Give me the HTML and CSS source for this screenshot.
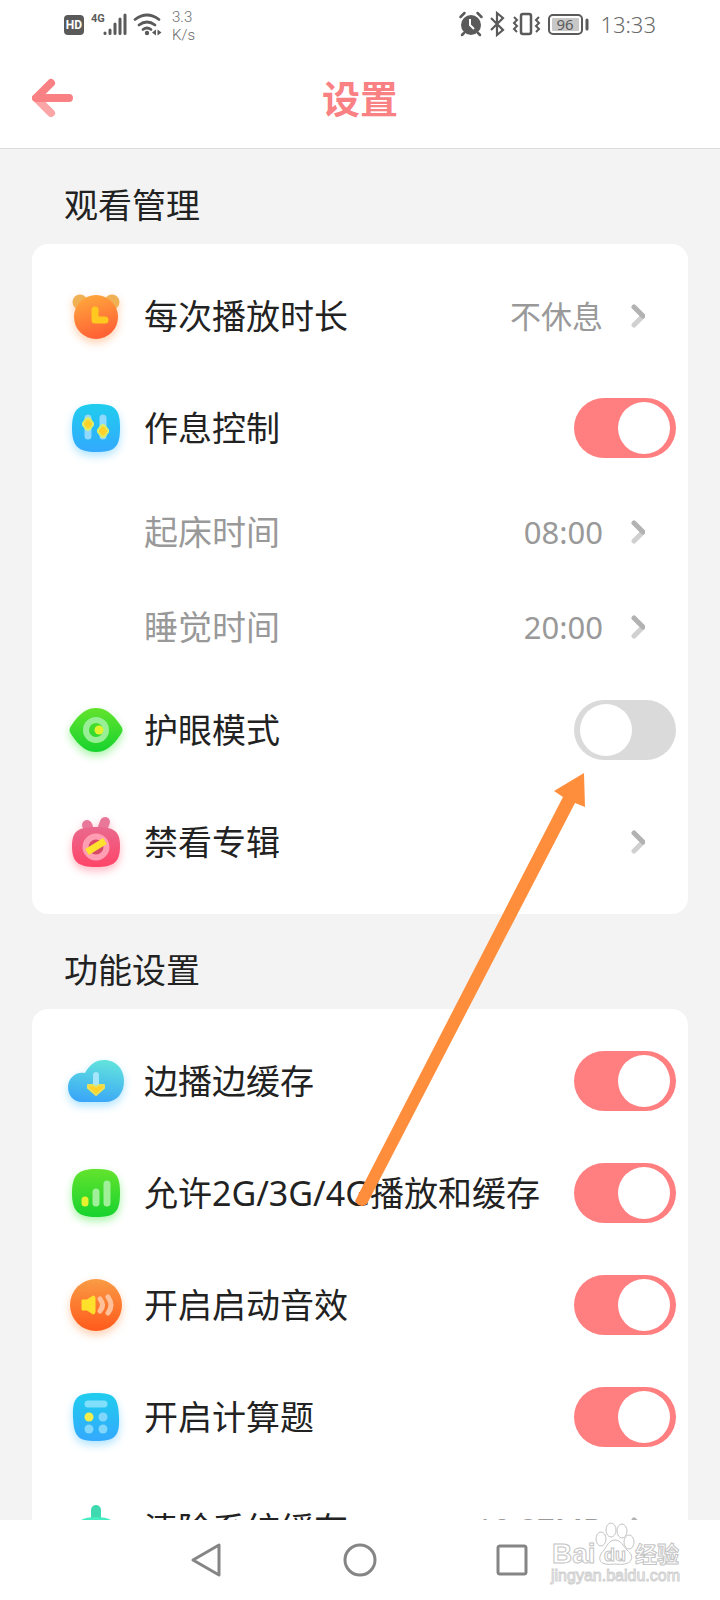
FILE: index.html
```
<!DOCTYPE html>
<html lang="zh-CN">
<head>
    <meta charset="UTF-8">
    <meta name="viewport" content="width=device-width, initial-scale=1.0">
    <title>设置</title>
    <link rel="stylesheet" href="styles.css">
</head>
<body>
    <!-- Status bar -->
    <div class="status-bar">
        <div class="status-left">
            <svg width="110" height="32" viewBox="0 0 110 32">
                <rect x="2" y="7" width="20" height="20" rx="4" fill="#5a5a5a"/>
                <text class="status-hd" x="12" y="21" text-anchor="middle">HD</text>
                <text class="status-4g" x="29" y="14">4G</text>
                <g stroke="#5a5a5a" stroke-width="3" stroke-linecap="round">
                    <path d="M43 25v.5M48 22v3.500M53 16v9.500M58 11v14.500M63 7v18.500"/>
                </g>
                <g fill="none" stroke="#5a5a5a" stroke-width="2.800" stroke-linecap="round">
                    <path d="M73 11.500q12-9 24 0M77 17q8-6 16 0M81 21.500q4-3 8 0"/>
                </g>
                <circle cx="85" cy="25" r="2.200" fill="#5a5a5a"/>
                <path d="M90 24.500l4-3v6zM99.500 24.500l-4-3v6z" fill="#5a5a5a"/>
            </svg>
            <div class="net-speed">3.3<br>K/s</div>
        </div>
        <div class="status-right">
            <svg width="134" height="32" viewBox="0 0 134 32">
                <circle cx="13" cy="17" r="10" fill="#5a5a5a"/>
                <path d="M2.500 9l4-4M23.500 9l-4-4M6 25l-2 2M20 25l2 2" stroke="#5a5a5a" stroke-width="2.500" stroke-linecap="round"/>
                <path d="M12 11v6l4 4" fill="none" stroke="#fff" stroke-width="2"/>
                <path d="M33 10l12 12-6 5V5l6 5-12 12" fill="none" stroke="#5a5a5a" stroke-width="2.200"/>
                <rect x="63" y="6" width="10" height="20" rx="2" fill="none" stroke="#5a5a5a" stroke-width="2.500"/>
                <path d="M56 9l3 3-3 3 3 3-3 3 3 3M81 9l-3 3 3 3-3 3 3 3-3 3" fill="none" stroke="#5a5a5a" stroke-width="2"/>
                <rect x="91" y="7" width="33" height="19" rx="4" fill="none" stroke="#5a5a5a" stroke-width="2"/>
                <rect x="94" y="10" width="27" height="13" rx="1" fill="#c8c8c8"/>
                <text class="status-battery" x="107" y="22" text-anchor="middle">96</text>
                <path d="M129 12v9" stroke="#5a5a5a" stroke-width="3" stroke-linecap="round"/>
            </svg>
            <span class="clock">13:33</span>
        </div>
    </div>

    <!-- Title bar -->
    <header class="title-bar">
        <button class="back" aria-label="返回">
            <svg width="42" height="40" viewBox="0 0 42 40">
                <path d="M4 20l15 15" stroke="#fba5a6" stroke-width="8" stroke-linecap="round"/>
                <path d="M19 5L4 20h33" fill="none" stroke="#f98083" stroke-width="8" stroke-linecap="round" stroke-linejoin="round"/>
            </svg>
        </button>
        <h1>设置</h1>
    </header>

    <main class="content">
        <h2>观看管理</h2>
        <section class="card">
            <button class="row">
                <svg class="icon glow-orange" viewBox="0 0 56 56">
                    <defs>
                        <linearGradient id="clock" x1="0" y1="0" x2="0.300" y2="1"><stop offset="0" stop-color="#ffad3c"/><stop offset="1" stop-color="#ff6335"/></linearGradient>
                    </defs>
                    <circle cx="12" cy="14" r="7.500" fill="#f0b054"/>
                    <circle cx="44" cy="14" r="7.500" fill="#f0b054"/>
                    <circle cx="28" cy="29" r="22" fill="url(#clock)"/>
                    <path d="M27 22v10h10" fill="none" stroke="#ffc91f" stroke-width="7" stroke-linecap="round" stroke-linejoin="round"/>
                </svg>
                <span class="label">每次播放时长</span>
                <span class="value">不休息</span>
                <svg class="chevron" viewBox="0 0 14 24"><path d="M3 21l9-9" stroke="#d0d0d0"/><path d="M3 3l9 9" stroke="#b2b2b2"/></svg>
            </button>
            <label class="row">
                <svg class="icon glow-blue" viewBox="0 0 56 56">
                    <defs>
                        <linearGradient id="blue" x1="0" y1="0" x2="0" y2="1"><stop offset="0" stop-color="#1fcdee"/><stop offset="1" stop-color="#33a9fd"/></linearGradient>
                    </defs>
                    <path d="M28 4C46 4 52 8 52 28S46 52 28 52 4 46 4 28 10 4 28 4z" fill="url(#blue)"/>
                    <path d="M20 18v18M35 18v18" stroke="#8fd9ff" stroke-width="7" stroke-linecap="round"/>
                    <path d="M20 18l2 1 3 4v2l-3 4-2 1-2-1-3-4v-2l3-4zM35 25l2 1 3 4v2l-3 4-2 1-2-1-3-4v-2l3-4z" fill="#ffd32a" stroke="#d9ee6c" stroke-width="2" stroke-linejoin="round"/>
                </svg>
                <span class="label">作息控制</span>
                <input class="switch" type="checkbox" checked>
            </label>
            <button class="row sub">
                <span class="label">起床时间</span>
                <span class="value">08:00</span>
                <svg class="chevron" viewBox="0 0 14 24"><path d="M3 21l9-9" stroke="#d0d0d0"/><path d="M3 3l9 9" stroke="#b2b2b2"/></svg>
            </button>
            <button class="row sub">
                <span class="label">睡觉时间</span>
                <span class="value">20:00</span>
                <svg class="chevron" viewBox="0 0 14 24"><path d="M3 21l9-9" stroke="#d0d0d0"/><path d="M3 3l9 9" stroke="#b2b2b2"/></svg>
            </button>
            <label class="row">
                <svg class="icon glow-green" viewBox="0 0 56 56">
                    <defs>
                        <linearGradient id="green" x1="0" y1="0" x2="0" y2="1"><stop offset="0" stop-color="#63e32d"/><stop offset="1" stop-color="#16d32e"/></linearGradient>
                    </defs>
                    <path d="M3 24C12 10 20 6 28 6s16 4 25 18q3 4 0 8C44 46 36 50 28 50S12 46 3 32q-3-4 0-8z" fill="url(#green)"/>
                    <circle cx="28" cy="28" r="10" fill="none" stroke="#98ef95" stroke-width="6"/>
                    <circle cx="31" cy="28" r="4.500" fill="#e2f32e"/>
                </svg>
                <span class="label">护眼模式</span>
                <input class="switch" type="checkbox">
            </label>
            <button class="row">
                <svg class="icon glow-pink" viewBox="0 0 56 56">
                    <defs>
                        <linearGradient id="pink" x1="0" y1="0" x2="0" y2="1"><stop offset="0" stop-color="#e9698d"/><stop offset="1" stop-color="#ff4468"/></linearGradient>
                    </defs>
                    <path d="M20 13l-1-2M35 13l2-5" stroke="#e9779a" stroke-width="10" stroke-linecap="round"/>
                    <path d="M28 13C46 13 52 17 52 32c0 16-6 21-24 21S4 48 4 32C4 17 10 13 28 13z" fill="url(#pink)"/>
                    <circle cx="28" cy="33" r="10.500" fill="#d94a6a" stroke="#ff9eb2" stroke-width="6"/>
                    <path d="M19 38l18-11" stroke="#ffe22e" stroke-width="7"/>
                </svg>
                <span class="label">禁看专辑</span>
                <svg class="chevron" viewBox="0 0 14 24"><path d="M3 21l9-9" stroke="#d0d0d0"/><path d="M3 3l9 9" stroke="#b2b2b2"/></svg>
            </button>
        </section>

        <h2>功能设置</h2>
        <section class="card">
            <label class="row">
                <svg class="icon glow-blue" viewBox="0 0 56 56">
                    <defs>
                        <linearGradient id="cloud" x1="0.600" y1="0" x2="0.400" y2="1"><stop offset="0" stop-color="#62e3dc"/><stop offset="1" stop-color="#3aa6f8"/></linearGradient>
                    </defs>
                    <path d="M14 49C5 49 0 42 0 34c0-9 8-16 17-14C22 11 28 7 36 7c12 0 20 9 20 21 0 13-8 21-19 21z" fill="url(#cloud)"/>
                    <path d="M28 22v12" stroke="#a4e6fa" stroke-width="6" stroke-linecap="round"/>
                    <path d="M20 32h5l3 2 3-2h5v3l-8 7-8-7z" fill="#ffd32a" stroke="#e6e15a" stroke-width="2" stroke-linejoin="round"/>
                </svg>
                <span class="label">边播边缓存</span>
                <input class="switch" type="checkbox" checked>
            </label>
            <label class="row">
                <svg class="icon glow-green" viewBox="0 0 56 56">
                    <path d="M28 4C46 4 52 8 52 28S46 52 28 52 4 46 4 28 10 4 28 4z" fill="url(#green)"/>
                    <path d="M28 27v11M39 19v19" stroke="#a0f09a" stroke-width="7" stroke-linecap="round"/>
                    <path d="M17 35v3" stroke="#e6f22e" stroke-width="7" stroke-linecap="round"/>
                </svg>
                <span class="label">允许2G/3G/4G播放和缓存</span>
                <input class="switch" type="checkbox" checked>
            </label>
            <label class="row">
                <svg class="icon glow-orange" viewBox="0 0 56 56">
                    <defs>
                        <linearGradient id="sound" x1="0" y1="0" x2="0" y2="1"><stop offset="0" stop-color="#f99b45"/><stop offset="1" stop-color="#ff5a1c"/></linearGradient>
                    </defs>
                    <circle cx="28" cy="28" r="26" fill="url(#sound)"/>
                    <path d="M14 23h5l6-4q2 0 2 2v14q0 2-2 2l-6-4h-5z" fill="#ffe02b" stroke="#ffe02b" stroke-width="1" stroke-linejoin="round"/>
                    <path d="M32 22q5 6 0 12M40 20q6 8 0 16" fill="none" stroke="#ffc09a" stroke-width="5" stroke-linecap="round"/>
                </svg>
                <span class="label">开启启动音效</span>
                <input class="switch" type="checkbox" checked>
            </label>
            <label class="row">
                <svg class="icon glow-blue" viewBox="0 0 56 56">
                    <path d="M28 4C46 4 50 8 51 28S46 52 28 52 6 48 5 28 10 4 28 4z" fill="url(#blue)"/>
                    <path d="M20 15h16" stroke="#80e0fb" stroke-width="7" stroke-linecap="round"/>
                    <g fill="#80d6fb">
                        <circle cx="35" cy="28" r="4.500"/><circle cx="21" cy="40" r="4.500"/><circle cx="35" cy="40" r="4.500"/>
                    </g>
                    <circle cx="21" cy="28" r="4.500" fill="#f2ef4c"/>
                </svg>
                <span class="label">开启计算题</span>
                <input class="switch" type="checkbox" checked>
            </label>
            <button class="row">
                <svg class="icon" viewBox="0 0 56 56">
                    <path d="M28 9v10" stroke="#3fd9b0" stroke-width="10" stroke-linecap="round"/>
                    <path d="M8 24q4-8 20-8t20 8v24H8z" fill="#45ecc0"/>
                </svg>
                <span class="label">清除系统缓存</span>
                <span class="value">10.87MB</span>
                <svg class="chevron" viewBox="0 0 14 24"><path d="M3 21l9-9" stroke="#d0d0d0"/><path d="M3 3l9 9" stroke="#b2b2b2"/></svg>
            </button>
        </section>
    </main>

    <!-- System navigation -->
    <nav class="nav-bar">
        <button aria-label="后退"><svg width="36" height="36" viewBox="0 0 36 36"><path d="M29 3v30L3 18z"/></svg></button>
        <button aria-label="主页"><svg width="36" height="36" viewBox="0 0 36 36"><circle cx="18" cy="18" r="15"/></svg></button>
        <button aria-label="最近任务"><svg width="36" height="36" viewBox="0 0 36 36"><rect x="4" y="4" width="28" height="28" rx="2"/></svg></button>
    </nav>

    <!-- Annotation arrow over the page -->
    <svg class="arrow" viewBox="0 0 240 440">
        <path d="M229 3l1 34-10-4L12 434q-7 5-12-3L208 27l-9-6z" fill="#ff8e3c"/>
    </svg>

    <div class="watermark">
        <svg width="132" height="44" viewBox="0 0 132 44">
            <g fill="#fff" stroke="#c4c4c4">
                <ellipse cx="50" cy="17" rx="5" ry="7"/>
                <ellipse cx="60" cy="8" rx="5" ry="7"/>
                <ellipse cx="71" cy="9" rx="5" ry="7"/>
                <ellipse cx="78" cy="20" rx="5" ry="7"/>
                <path d="M64 18c6 0 8 6 12 10s6 6 4 10-8 5-16 4c-8 1-14 0-15-4s1-6 4-10 5-10 11-10z"/>
                <text class="wm-text" x="1" y="41">Bai</text>
                <text class="wm-du" x="64" y="39" text-anchor="middle">du</text>
                <text class="wm-text wm-cn" x="84" y="40">经验</text>
            </g>
        </svg>
        <span>jingyan.baidu.com</span>
    </div>
</body>
</html>
```
FILE: styles.css
```
* {
    box-sizing: border-box;
}

body {
    margin: 0;
    height: 100vh;
    display: flex;
    flex-direction: column;
    position: relative;
    overflow: hidden;
    background-color: #f3f3f3;
    color: #222;
    font-family: "Noto Sans", "Noto Sans CJK SC", sans-serif;
}

button {
    border: none;
    background: none;
    padding: 0;
    color: inherit;
    font-family: inherit;
    cursor: pointer;
}

/* Status bar */
.status-bar {
    display: flex;
    justify-content: space-between;
    height: 48px;
    padding: 8px 64px 0 62px;
    background-color: #fff;
    color: #6a6a6a;
}

.status-left,
.status-right {
    display: flex;
}

.net-speed {
    font-family: Roboto, sans-serif;
    font-size: 15px;
    font-weight: 300;
    line-height: 18px;
}

.status-right {
    gap: 8px;
}

.clock {
    font-size: 22px;
    font-weight: 300;
    line-height: 32px;
}

.status-hd {
    fill: #fff;
    font: bold 12px Roboto, sans-serif;
}

.status-4g {
    fill: #5a5a5a;
    font: bold 11px Roboto, sans-serif;
}

.status-battery {
    fill: #5a5a5a;
    font-size: 15px;
}

/* Title bar */
.title-bar {
    display: grid;
    grid-template-columns: 1fr auto 1fr;
    align-items: center;
    height: 101px;
    padding: 0 32px;
    background-color: #fff;
    border-bottom: 1px solid #ddd;
}

.back {
    justify-self: start;
    height: 40px;
}

h1 {
    margin: 0;
    color: #f98083;
    font-size: 38px;
    line-height: 48px;
}

/* Content */
.content {
    flex: 1;
    min-height: 0;
    overflow: hidden;
    padding: 0 32px;
}

h2 {
    margin: 0;
    padding: 32px 32px 15px;
    font-size: 34px;
    font-weight: 400;
    line-height: 48px;
}

.card {
    padding: 16px 0;
    border-radius: 16px;
    background-color: #fff;
}

.row {
    display: flex;
    align-items: center;
    width: 100%;
    height: 112px;
    padding: 0 12px 0 36px;
    text-align: left;
}

.row.sub {
    height: 95px;
    padding-left: 112px;
    color: #999;
}

.icon {
    width: 56px;
    height: 56px;
    margin-right: 20px;
    overflow: visible;
}

.glow-orange {
    filter: drop-shadow(0 4px 4px #ffd0b0);
}

.glow-blue {
    filter: drop-shadow(0 4px 4px #b0e4ff);
}

.glow-green {
    filter: drop-shadow(0 4px 4px #a8f5a8);
}

.glow-pink {
    filter: drop-shadow(0 4px 4px #ffb8c4);
}

.label {
    flex: 1;
    font-size: 34px;
    line-height: 48px;
    white-space: nowrap;
}

.value {
    color: #999;
    font-size: 31px;
    line-height: 48px;
}

.chevron {
    width: 14px;
    height: 24px;
    margin: 0 31px 0 28px;
    fill: none;
    stroke-width: 5;
    stroke-linecap: round;
}

/* Switch */
.switch {
    appearance: none;
    width: 102px;
    height: 60px;
    margin: 0;
    padding: 4px 6px;
    border-radius: 30px;
    background-color: #dadada;
    display: flex;
    cursor: pointer;
}

.switch::before {
    content: "";
    width: 52px;
    height: 52px;
    border-radius: 50%;
    background-color: #fff;
}

.switch:checked {
    justify-content: flex-end;
    background-color: #ff7f81;
}

/* Navigation bar */
.nav-bar {
    display: flex;
    justify-content: center;
    align-items: center;
    gap: 116px;
    height: 80px;
    background-color: #fff;
}

.nav-bar button {
    height: 36px;
}

.nav-bar svg {
    fill: none;
    stroke: #858585;
    stroke-width: 3;
    stroke-linejoin: round;
}

/* Overlays */
.arrow {
    position: absolute;
    top: 770px;
    left: 355px;
    width: 240px;
    height: 440px;
    pointer-events: none;
}

.watermark {
    position: absolute;
    right: 37px;
    bottom: 14px;
    display: flex;
    flex-direction: column;
    width: 132px;
    color: #fff;
    font-family: "Liberation Sans", sans-serif;
    font-size: 16px;
    line-height: 20px;
    -webkit-text-stroke: 1px #d0d0d0;
    pointer-events: none;
}

.wm-text {
    font: bold 28px "Liberation Sans", sans-serif;
}

.wm-cn {
    font: bold 22px "Noto Sans CJK SC", sans-serif;
}

.wm-du {
    font: bold 18px "Liberation Sans", sans-serif;
}
```
